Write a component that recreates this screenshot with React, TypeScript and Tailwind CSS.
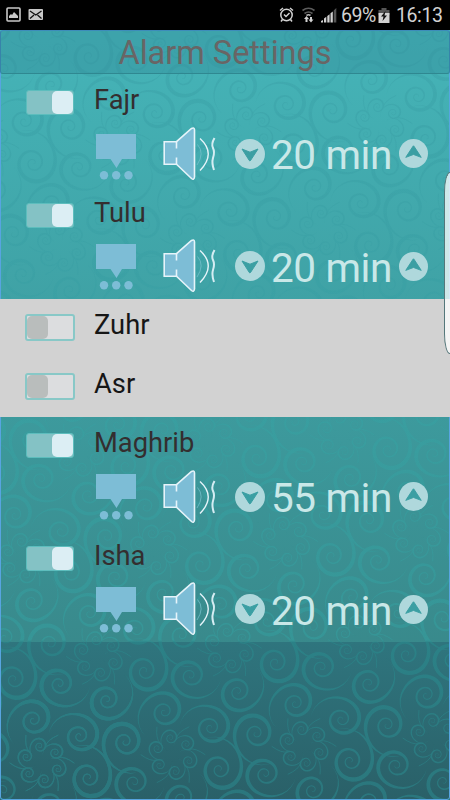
import clsx from "clsx";
import { useState } from "react";

interface IAlarm {
  name: string;
  enabled: boolean;
  minutes: number;
}

const initialAlarms: IAlarm[] = [
  { name: "Fajr", enabled: true, minutes: 20 },
  { name: "Tulu", enabled: true, minutes: 20 },
  { name: "Zuhr", enabled: false, minutes: 0 },
  { name: "Asr", enabled: false, minutes: 0 },
  { name: "Maghrib", enabled: true, minutes: 55 },
  { name: "Isha", enabled: true, minutes: 20 },
];

// [outer radius, thickness] of a curl at every quarter turn, tail first
const profile = [
  [31, 0],
  [22.5, 2.7],
  [19.5, 3.9],
  [15, 3.3],
  [12.5, 2.3],
  [9.5, 1.8],
  [7.5, 1.4],
  [5.5, 1.1],
  [4, 0.9],
  [2.5, 0.7],
  [1.2, 0.4],
];

const sample = (t: number, k: number) => {
  const i = Math.min(Math.floor(t), profile.length - 2);
  const f = t - i;
  const at = (n: number) =>
    profile[Math.max(0, Math.min(n, profile.length - 1))][k];
  const [a, b, c, d] = [at(i - 1), at(i), at(i + 1), at(i + 2)];
  return (
    b +
    0.5 *
      f *
      (c - a + f * (2 * a - 5 * b + 4 * c - d + f * (3 * (b - c) + d - a)))
  );
};

const curlPath = (() => {
  const outer: string[] = [];
  const inner: string[] = [];
  for (let t = 0; t <= 10; t += 0.125) {
    const angle = Math.PI + (t * Math.PI) / 2;
    const point = (radius: number) =>
      `${(radius * Math.cos(angle)).toFixed(2)} ${(radius * Math.sin(angle)).toFixed(2)}`;
    const r = sample(t, 0);
    outer.push(point(r));
    inner.unshift(point(r - sample(t, 1)));
  }
  return `M${outer.concat(inner).join("L")}Z`;
})();

const curls = [
  { x: 88.3, y: 777.7, angle: 62, scale: 1.12 },
  { x: 59.3, y: 684, angle: 184, scale: 1 },
  { x: 106.7, y: 700, angle: 125, scale: 1 },
  { x: 33.3, y: 720, angle: -54, scale: 1 },
  { x: 79.5, y: 736, angle: 2, scale: 1 },
  { x: 125, y: 741.7, angle: -122, scale: 1.1 },
];

const cells: { x: number; y: number }[] = [];
for (let row = -8; row <= 1; row++) {
  for (let col = -2; col <= 9; col++) {
    const x = col * 131 + row * 74.7;
    const y = col * -8.3 + row * 98.3;
    if (x > -200 && x < 460 && y > -830 && y < 150) cells.push({ x, y });
  }
}

const Swirls = () => (
  <svg
    className="pointer-events-none absolute inset-0"
    width="450"
    height="800"
    viewBox="0 0 450 800"
  >
    <defs>
      <linearGradient
        id="ink"
        gradientUnits="userSpaceOnUse"
        x1="0"
        y1="0"
        x2="0"
        y2="800"
      >
        <stop offset="0.04" stopColor="#3697a0" stopOpacity="0.3" />
        <stop offset="0.36" stopColor="#369ea3" stopOpacity="0.35" />
        <stop offset="0.52" stopColor="#38a1a2" stopOpacity="0.6" />
        <stop offset="0.8" stopColor="#369899" stopOpacity="0.8" />
        <stop offset="0.803" stopColor="#2c8388" stopOpacity="0.9" />
        <stop offset="1" stopColor="#2b7a80" stopOpacity="0.9" />
      </linearGradient>
      <mask id="curls">
        <g id="cell" fill="#fff">
          {curls.map((c, i) => (
            <path
              key={i}
              d={curlPath}
              transform={`translate(${c.x} ${c.y}) rotate(${c.angle}) scale(${c.scale})`}
            />
          ))}
          {[0, 60, 120, 180, 240, 300].map((angle) => (
            <g key={angle} transform={`translate(42 763) rotate(${angle - 8})`}>
              <path
                d={curlPath}
                transform="translate(0 -17) rotate(-70) scale(0.42)"
              />
              <path
                d="M-11 -13Q-15 -18 -12 -30"
                fill="none"
                stroke="#fff"
                strokeWidth="0.8"
              />
            </g>
          ))}
        </g>
        {cells.map((cell, i) => (
          <use key={i} href="#cell" x={cell.x} y={cell.y} />
        ))}
      </mask>
    </defs>
    <rect y="30" width="450" height="770" fill="url(#ink)" mask="url(#curls)" />
  </svg>
);

const StatusBar = () => (
  <div className="flex h-[30px] items-center bg-black pr-[7px] pl-[6px] text-[#d2d2d2]">
    <svg width="38" height="16" viewBox="0 0 38 16">
      <rect x="1" y="1" width="13" height="13" rx="1" fill="none" stroke="#c8c8c8" strokeWidth="1.6" />
      <path d="M3 11V9l2-2 1 1 2-3 2 2 2 2v2z" fill="#c8c8c8" />
      <rect x="22.5" y="2" width="14.5" height="11" rx="1" fill="#c8c8c8" />
      <path d="M24 4l5.8 4L35.5 4M24 11.5l4-3.5M35.5 11.5l-4-3.5" fill="none" stroke="#111" strokeWidth="1.3" />
    </svg>
    <svg className="ml-auto" width="62" height="18" viewBox="0 0 62 18">
      <g fill="none" stroke="#d2d2d2" strokeWidth="1.5">
        <circle cx="7.5" cy="9" r="5.7" />
        <path d="M5 8.5l2 2 3.5-3.5M1 4.500l3-2.5M14 4.500l-3-2.5M3.500 13.500L2 15.500M11.500 13.500l1.500 2" />
      </g>
      <g fill="none" stroke="#5c5c5c" strokeWidth="1.6">
        <path d="M23.5 4.5Q29.5 0 35.5 4.5M25.500 7.500Q29.500 4.500 33.500 7.500" />
        <path d="M27.5 9.5Q29.5 8 31.5 9.5" stroke="#bbb" />
      </g>
      <path d="M27.5 10l2.5 3h-1.5v3h-2v-3H25zM32 16.500l-2.500-3H31V11h2v2.500h1.500z" fill="#d2d2d2" />
      <g fill="#d2d2d2">
        <path d="M42 16.5v-1.500l2-1v2.500zM45 16.500v-4l2.300-1.700v5.700zM48.300 16.500V10l2.300-1.800v8.300zM51.500 16.500V7.200l2.300-1.700v11z" />
        <path d="M54.7 16.5V4.5L57.300 2v14.500z" fill="#555" />
      </g>
    </svg>
    <span className="w-[37px] pt-0.5 text-[19.5px] leading-[30px] tracking-[-0.5px]">69%</span>
    <svg width="12" height="17" viewBox="0 0 12 17">
      <path d="M0.5 3h3V1h5v2h3v5h-11z" fill="#555" />
      <path d="M0.5 6h11v10h-11z" fill="#d2d2d2" />
      <path d="M7.5 4L3 9.500h2.500L4.500 14 9 8.500H6.500z" fill="#111" />
    </svg>
    <span className="ml-[6px] w-[47px] pt-0.5 text-[19.5px] leading-[30px] tracking-[-0.4px]">16:13</span>
  </div>
);

const Toggle = ({
  enabled,
  onClick,
}: {
  enabled: boolean;
  onClick: () => void;
}) => (
  <button
    type="button"
    onClick={onClick}
    className={clsx("flex shrink-0 items-center rounded-[3px]", {
      "mt-4 ml-[26px] h-[25px] w-12 justify-end border border-[#5dbdbd] bg-[#84c2c5]":
        enabled,
      "mt-[15px] ml-[25px] h-[27px] w-[50px] border-2 border-[#88c8c7] bg-[#dcdddf]":
        !enabled,
    })}
  >
    <span
      className={clsx("h-[23px] w-[21px] rounded-[5px]", {
        "bg-[#dceef4]": enabled,
        "bg-[#b9bdbc]": !enabled,
      })}
    />
  </button>
);

const MessageIcon = () => (
  <svg width="40" height="46" viewBox="0 0 40 46" fill="#7dbdd6">
    <path d="M0 0h40v25H26L20.500 34 14.500 25H0z" />
    <circle cx="8" cy="41.3" r="4.2" />
    <circle cx="20.2" cy="41.3" r="4.2" />
    <circle cx="32.5" cy="41.3" r="4.2" />
  </svg>
);

const SpeakerIcon = () => (
  <svg width="54" height="54" viewBox="0 0 54 54" fill="none">
    <path
      d="M1.2 14.7H13.500L28.500 1.500Q31.500 0 31.500 3V50Q31 53.500 28.500 51.500L13.500 37.200H1.200z"
      fill="#7dbdd6"
      stroke="#e6f4fa"
      strokeWidth="1.6"
    />
    <path d="M13.5 14.5v7M13.5 30.5v7" stroke="#e6f4fa" strokeWidth="1.6" />
    <path d="M34.5 17.5Q42 26 34 38" stroke="#75bfca" strokeWidth="0.8" />
    <path d="M37 11.5Q53.500 26.500 37 43.500" stroke="#e6f4fa" strokeWidth="1.4" />
    <path d="M51.500 11q-3.500 6-1.500 10t0 10q-1.500 5 1 12" stroke="#d5edf3" strokeWidth="2" />
  </svg>
);

const ArrowIcon = ({ up }: { up?: boolean }) => (
  <svg
    className={clsx({ "rotate-180": up })}
    width={up ? 29 : 30}
    height={up ? 29 : 30}
    viewBox="0 0 30 30"
  >
    <circle cx="15" cy="15" r="15" fill="#afd8dc" />
    <path
      d={
        up
          ? "M7 11L15 14 23 11 15.500 22.500Q15 23.500 14.500 22.500z"
          : "M7 10L15 13.200 23 10 15.500 21.500Q15 22.500 14.300 21.500z"
      }
      className="fill-[#3b9fa3] stroke-[#3b9fa3]"
      strokeWidth="1"
      strokeLinejoin="round"
    />
  </svg>
);

const App = () => {
  const [alarms, setAlarms] = useState(initialAlarms);

  const update = (index: number, values: Partial<IAlarm>) => {
    setAlarms((prev) =>
      prev.map((alarm, i) => (i === index ? { ...alarm, ...values } : alarm)),
    );
  };

  return (
    <div className="relative flex h-[800px] w-[450px] flex-col overflow-hidden bg-linear-to-b from-[#45b4b8] from-5% via-[#3d9b9e] via-50% to-[#388789] to-85% font-[Roboto,sans-serif]">
      <div className="absolute inset-x-0 top-[642px] bottom-0 bg-linear-to-b from-[#2f757e] to-[#2a6068]" />
      <Swirls />
      <div className="pointer-events-none absolute inset-x-0 top-[30px] bottom-0 rounded-[3px] border border-[#58a4e0]" />

      <StatusBar />
      <h1 className="relative h-11 rounded-[3px] border border-t-[#3d8cba] border-r-[#3783aa] border-b-[#2f8891] border-l-[#3783aa] bg-[#328d9c]/45 text-center text-[32.5px] leading-[44px] font-normal text-[#696565]">
        Alarm Settings
      </h1>

      <div className="relative flex flex-col">
        {alarms.map((alarm, i) => (
          <div
            key={alarm.name}
            className={clsx({
              "h-[112.5px]": alarm.enabled,
              "h-[59px] bg-[#d2d2d2]": !alarm.enabled,
            })}
          >
            <div className="flex h-[53px] items-start">
              <Toggle
                enabled={alarm.enabled}
                onClick={() => update(i, { enabled: !alarm.enabled })}
              />
              <span
                className={clsx("mt-[10px] text-[27.3px] leading-8", {
                  "ml-5 text-[#342e2f]": alarm.enabled,
                  "ml-[19px] text-[#161616]": !alarm.enabled,
                })}
              >
                {alarm.name}
              </span>
            </div>
            {alarm.enabled && (
              <div className="flex h-[53px] items-center pl-24">
                <span className={i === 0 ? "mt-[7px]" : "mt-px"}>
                  <MessageIcon />
                </span>
                <span className="ml-[27px]">
                  <SpeakerIcon />
                </span>
                <button
                  type="button"
                  className="ml-[18px]"
                  onClick={() => update(i, { minutes: alarm.minutes - 5 })}
                >
                  <ArrowIcon />
                </button>
                <span className="mt-[3px] ml-[6px] w-[122px] text-[40.5px] leading-[50px] tracking-[-0.4px] whitespace-nowrap text-[#c9e8e8]">
                  {alarm.minutes} min
                </span>
                <button
                  type="button"
                  className="ml-[6px]"
                  onClick={() => update(i, { minutes: alarm.minutes + 5 })}
                >
                  <ArrowIcon up />
                </button>
              </div>
            )}
          </div>
        ))}
      </div>

      {/* edge panel handle */}
      <div className="absolute top-[172px] right-0 h-[182px] w-[6px] rounded-l-[6px_20px] border border-r-0 border-[#55777a] bg-white/75" />
    </div>
  );
};

export default App;
